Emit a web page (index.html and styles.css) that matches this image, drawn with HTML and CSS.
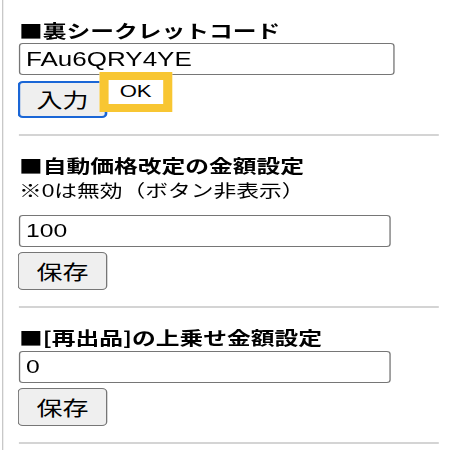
FILE: index.html
```html
<!DOCTYPE html>
<html lang="ja">
<head>
    <meta charset="UTF-8">
    <meta name="viewport" content="width=device-width, initial-scale=1.0">
    <title>設定</title>
    <link rel="stylesheet" href="styles.css">
</head>
<body>
    <div class="page">
        <section class="block">
            <h3 class="title">■裏シークレットコード</h3>
            <input class="field field-wide" type="text" value="FAu6QRY4YE">
            <div class="actions actions-main">
                <button class="btn btn-focus">入力</button>
                <span class="badge">OK</span>
            </div>
        </section>
        <hr class="rule">

        <section class="block">
            <h3 class="title">■自動価格改定の金額設定</h3>
            <p class="note">※0は無効（ボタン非表示）</p>
            <input class="field" type="text" value="100">
            <div class="actions">
                <button class="btn">保存</button>
            </div>
        </section>
        <hr class="rule">

        <section class="block">
            <h3 class="title">■[再出品]の上乗せ金額設定</h3>
            <input class="field" type="text" value="0">
            <div class="actions">
                <button class="btn">保存</button>
            </div>
        </section>
        <hr class="rule">
    </div>
</body>
</html>
```

FILE: styles.css
```css
html, body {
    margin: 0;
    overflow: hidden;
    background: #fff;
}

body {
    font-family: "Liberation Sans", "Noto Sans CJK JP", sans-serif;
    color: #000;
}

/* the screenshot is stretched sideways, so the whole page is too */
.page {
    box-sizing: border-box;
    width: 340px;
    height: 450px;
    margin-left: 1.5px;
    padding: 18px 0 0 12px;
    border-left: 1px solid #c8c8c8;
    transform: scaleX(1.3);
    transform-origin: 0 0;
}

.title {
    margin: 0;
    font-family: "Noto Sans CJK JP", sans-serif;
    font-size: 18.3px;
    line-height: 24px;
    font-weight: bold;
}

.note {
    margin: 2px 0 0;
    font-size: 17.5px;
    line-height: 24px;
}

.field {
    display: block;
    box-sizing: border-box;
    width: 286px;
    height: 32px;
    margin-top: 2px;
    padding: 0 4.5px;
    border: 1.5px solid #767676;
    border-radius: 3px;
    background: #fff;
    color: #000;
    font-family: "Liberation Sans", sans-serif;
    font-size: 19px;
}

.field-wide {
    width: 289px;
    margin-top: 1px;
    font-size: 20px;
}

.note + .field {
    margin-top: 12px;
}

.actions {
    position: relative;
    margin-top: 5px;
}

.actions-main {
    margin-top: 6px;
}

.btn {
    display: block;
    box-sizing: border-box;
    width: 68.5px;
    height: 38px;
    margin-left: -0.8px;
    padding: 0;
    border: 1.5px solid #767676;
    border-radius: 4px;
    background: #efefef;
    color: #000;
    font-family: "Liberation Sans", "Noto Sans CJK JP", sans-serif;
    font-size: 20px;
}

.btn-focus {
    height: 37px;
    border: 2px solid #1a66d6;
}

.badge {
    position: absolute;
    left: 62px;
    top: -9px;
    padding: 0 8.5px;
    border: 8px solid #f8c632;
    border-left-width: 7px;
    border-right-width: 7px;
    background: #fff;
    font-size: 17px;
    line-height: 24px;
}

.rule {
    width: 322.5px;
    height: 2px;
    margin: 16px 0 17px;
    border: 0;
    background: #d4d4d4;
}
```
